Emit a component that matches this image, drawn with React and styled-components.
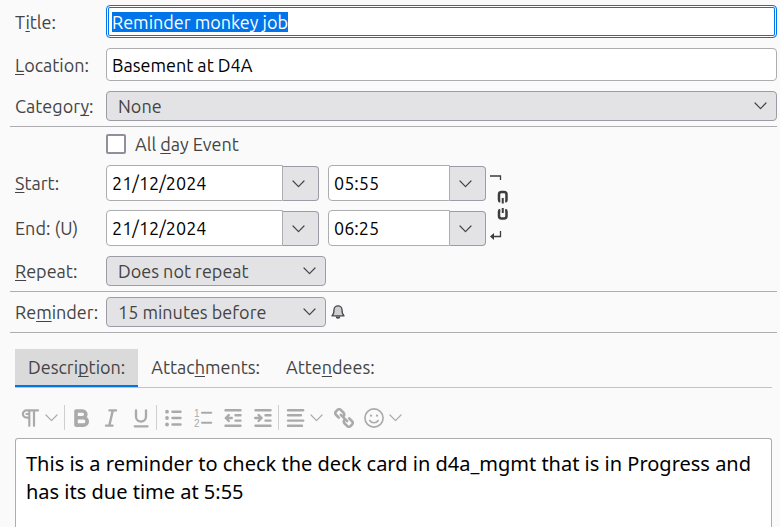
import React, { useEffect, useRef, useState } from 'react';
import styled, { createGlobalStyle } from 'styled-components';

const GlobalStyle = createGlobalStyle`
  * {
    box-sizing: border-box;
  }

  body {
    margin: 0;
    background: #fafafa;
    color: #444;
    font-family: Ubuntu, "Noto Sans", sans-serif;
    font-size: 18px;
    line-height: 24px;
  }

  button, input, select, textarea {
    margin: 0;
    font: inherit;
    color: inherit;
  }
`;

const Page = styled.main`
  display: flex;
  flex-direction: column;
  min-height: 100vh;
`;

const Section = styled.section`
  display: grid;
  row-gap: 10px;
  margin: 0 3px 0 10px;
  padding: 5px 0 5px 5px;
  border-bottom: 1px solid #adadb0;
`;

const Row = styled.div`
  display: grid;
  grid-template-columns: 91px minmax(0, 1fr);
  align-items: center;
`;

const AllDay = styled.label`
  grid-column: 2;
  display: flex;
  align-items: center;
  gap: 9px;
  height: 23px;
`;

const CheckBox = styled.input`
  appearance: none;
  width: 20px;
  height: 20px;
  border: 2px solid #8f8f9d;
  border-radius: 2px;
  background: white;

  &:checked {
    background: #0074e8;
  }
`;

const Key = styled.span`
  text-decoration: underline;
  text-decoration-thickness: 1px;
  text-underline-offset: 2px;
  text-decoration-skip-ink: none;
`;

const TextInput = styled.input`
  width: 100%;
  height: 33px;
  padding: 0 5px;
  border: 1px solid #adadb0;
  border-radius: 4px;
  background: white;
  color: #000;
  outline: none;

  &:focus {
    border-color: #0074e8;
    box-shadow: inset 0 0 0 1px white, inset 0 0 0 2px #0074e8;
  }

  &::selection {
    background: #0074e8;
    color: white;
  }
`;

const SelectBox = styled.div`
  position: relative;
  width: ${props => props.$wide ? '100%' : '220px'};

  svg {
    position: absolute;
    top: 11px;
    right: 10px;
    pointer-events: none;
  }
`;

const Select = styled.select`
  appearance: none;
  display: block;
  width: 100%;
  height: 30px;
  padding: 0 30px 0 11px;
  border: 1px solid #9c9ca6;
  border-radius: 4px;
  background: #e3e3e6;
`;

const ReminderField = styled.div`
  display: flex;
  align-items: center;
  gap: 5px;
`;

const DateGrid = styled.div`
  display: grid;
  grid-template-columns: 91px 222px 162px auto;
  justify-content: start;
  align-items: center;
  row-gap: 9px;
`;

const Picker = styled.div`
  display: flex;
  align-items: flex-end;
  margin-right: ${props => props.$gap}px;
`;

const PickerInput = styled(TextInput)`
  flex: 1;
  min-width: 0;
  height: 36px;
  border-radius: 4px 0 0 4px;
`;

const PickerButton = styled.button`
  display: flex;
  align-items: center;
  justify-content: center;
  width: 36px;
  height: 35px;
  padding: 0 4px 0 0;
  border: 1px solid #9c9ca6;
  border-left: 0;
  border-radius: 0 4px 4px 0;
  background: #e3e3e6;
`;

const LinkTimes = styled.button`
  grid-column: 4;
  grid-row: 1 / 3;
  display: flex;
  padding: 0;
  border: 0;
  background: none;
`;

const Tabs = styled.div`
  display: flex;
  height: 39px;
  margin: 16px 8px 0 15px;
  border-bottom: 1px solid #c4c4c6;
`;

const Tab = styled.button`
  padding: 0 13px;
  border: 0;
  border-bottom: 2px solid ${props => props.$active ? '#0074e8' : 'transparent'};
  background: ${props => props.$active ? '#dadadb' : 'none'};
`;

const Toolbar = styled.div`
  display: flex;
  height: 50px;
  margin: 0 8px 0 15px;
  padding: 17px 0 7px;
`;

const Tool = styled.button`
  display: flex;
  align-items: center;
  flex: none;
  width: ${props => props.$menu ? '49px' : '30px'};
  gap: 5px;
  padding: 0 0 0 5px;
  border: 0;
  background: none;
  color: #aaaaab;
`;

const Separator = styled.div`
  width: 1px;
  height: 25px;
  margin-right: 1px;
  background: #cfcfd0;
`;

const Editor = styled.textarea`
  display: block;
  flex: 1;
  min-height: 88px;
  margin: 0 8px 0 15px;
  padding: 11px 10px;
  border: 1px solid #adadb0;
  border-bottom: 0;
  border-radius: 3px 3px 0 0;
  background: white;
  color: #000;
  font-family: "Noto Sans", sans-serif;
  font-size: 20px;
  line-height: 28px;
  resize: none;
  overflow: hidden;
  outline: none;
`;

const Chevron = () => (
  <svg width="13" height="8" viewBox="0 0 13 8" fill="none" stroke="currentColor" strokeWidth="1.2" strokeLinecap="round" strokeLinejoin="round">
    <path d="M1 1 6.5 6.7 12 1" />
  </svg>
);

const Icon = ({ children, width = 2.4 }) => (
  <svg width="20" height="20" viewBox="0 0 20 20" fill="none" stroke="currentColor" strokeWidth={width} strokeLinecap="round" strokeLinejoin="round">
    {children}
  </svg>
);

const ParagraphIcon = () => (
  <Icon width={2.2}>
    <path d="M18 2.4H6.5a3.6 3.6 0 0 0 0 7.2H9M9.3 2.4V17.8M14 2.4V17.8" />
    <path d="M6.5 6H8.5" />
  </Icon>
);

const BoldIcon = () => (
  <Icon width={3.6}>
    <path d="M5 3H11.5a3.3 3.3 0 0 1 0 6.7H5M5 9.7H12.5a3.7 3.7 0 0 1 0 7.4H5ZM5 3V17" />
  </Icon>
);

const ItalicIcon = () => (
  <Icon width={2.4}>
    <path d="M8.5 2.4H15M5 17.6H11.5M11.8 2.4 8.3 17.6" />
  </Icon>
);

const UnderlineIcon = () => (
  <Icon width={2.3}>
    <path d="M5 2.3V8.6a5 5 0 0 0 10 0V2.3M3.7 18.3H16.6" />
  </Icon>
);

const BulletsIcon = () => (
  <Icon>
    <path d="M9.5 3.7H17.5M9.5 10H17.5M9.5 16.5H17.5" />
    <g fill="currentColor" stroke="none">
      <circle cx="4" cy="3.7" r="1.9" />
      <circle cx="4" cy="10" r="1.9" />
      <circle cx="4" cy="16.5" r="1.9" />
    </g>
  </Icon>
);

const NumbersIcon = () => (
  <Icon width={2}>
    <path d="M9 4.8H18.3M9 14.7H18.3" />
    <g fill="currentColor" stroke="none" fontSize="10" fontFamily="Liberation Sans, sans-serif">
      <text x="1" y="9">1</text>
      <text x="1" y="19">2</text>
    </g>
  </Icon>
);

const OutdentIcon = () => (
  <Icon>
    <path d="M2.5 2.2H17.5M12.5 7.3H17.5M12.5 12.6H17.5M2.5 17.8H17.5" />
    <path d="M2.8 10H8.8M5.8 7 2.8 10l3 3" />
  </Icon>
);

const IndentIcon = () => (
  <Icon>
    <path d="M2.5 2.2H17.5M12.5 7.3H17.5M12.5 12.6H17.5M2.5 17.8H17.5" />
    <path d="M2.2 10H8.2M5.6 7l3 3-3 3" />
  </Icon>
);

const AlignIcon = () => (
  <Icon>
    <path d="M3 2.2H18.2M3 7.3H16M3 12.6H18.2M3 17.8H17" />
  </Icon>
);

const ChainIcon = () => (
  <Icon width={2.6}>
    <g transform="translate(10 10) rotate(45)">
      <path d="M-4 3.4H-8A2.3 2.3 0 0 1-10.3 1.1V-1.1A2.3 2.3 0 0 1-8-3.4H-4A2.3 2.3 0 0 1-1.7-1.1" />
      <path d="M4-3.4H8A2.3 2.3 0 0 1 10.3-1.1V1.1A2.3 2.3 0 0 1 8 3.4H4A2.3 2.3 0 0 1 1.7 1.1" />
      <path d="M-4.5 0H4.5" />
    </g>
  </Icon>
);

const SmileIcon = () => (
  <Icon width={1.6}>
    <circle cx="10" cy="10" r="9.1" />
    <path d="M5.8 12.5c2 3 6.4 3 8.4 0" />
    <circle cx="7" cy="7.7" r="1.1" fill="currentColor" stroke="none" />
    <circle cx="13" cy="7.7" r="1.1" fill="currentColor" stroke="none" />
  </Icon>
);

const BellIcon = () => (
  <svg width="14" height="16" viewBox="0 0 14 16" fill="none" stroke="#4a4a4d" strokeWidth="1.3" strokeLinejoin="round">
    <path d="M1 11.8c1.5-1.2 2-2.5 2-6a4 4 0 0 1 8 0c0 3.5.5 4.8 2 6Z" fill="#cfcfd2" />
    <path d="M5.3 12.5a1.7 1.7 0 0 0 3.4 0" fill="#4a4a4d" />
  </svg>
);

// bracket from the start time to the end time, with the open link between
const TimeLinkIcon = () => (
  <svg width="20" height="70" viewBox="0 0 20 70" fill="none" stroke="#3d3d3d">
    <path d="M0 5H10.5V9M10.5 60V65.5H3" strokeWidth="1.3" />
    <path d="M0 65.5 4 62V69Z" fill="#3d3d3d" stroke="none" />
    <path d="M10.3 30.5A1.5 1.5 0 0 1 9 29V23.500A2.500 2.500 0 0 1 11.500 21H14a2.500 2.500 0 0 1 2.500 2.500V29A1.500 1.500 0 0 1 15.200 30.500" strokeWidth="2.500" />
    <path d="M10.300 39A1.500 1.500 0 0 0 9 40.500V45a2.500 2.500 0 0 0 2.500 2.500H14A2.500 2.500 0 0 0 16.500 45V40.500A1.500 1.500 0 0 0 15.200 39" strokeWidth="2.500" />
    <path d="M12.750 27V32.500M12.750 37V42" strokeWidth="2" />
  </svg>
);

const DateTimeRow = ({ id, name, date, time, children }) => (
  <>
    <label htmlFor={id}>{children}</label>
    <Picker $gap={9}>
      <PickerInput id={id} defaultValue={date} />
      <PickerButton type="button" aria-label={`Choose ${name} date`}><Chevron /></PickerButton>
    </Picker>
    <Picker $gap={4}>
      <PickerInput aria-label={`${name} time`} defaultValue={time} />
      <PickerButton type="button" aria-label={`Choose ${name} time`}><Chevron /></PickerButton>
    </Picker>
  </>
);

const SelectField = ({ id, wide, options }) => (
  <SelectBox $wide={wide}>
    <Select id={id}>
      {options.map(option => <option key={option}>{option}</option>)}
    </Select>
    <Chevron />
  </SelectBox>
);

const EventForm = () => {
  const [tab, setTab] = useState('description');
  const titleRef = useRef(null);

  useEffect(() => {
    titleRef.current.focus();
    titleRef.current.select();
  }, []);

  return (
    <Page>
      <GlobalStyle />
      <Section>
        <Row>
          <label htmlFor="title">T<Key>i</Key>tle:</label>
          <TextInput id="title" ref={titleRef} defaultValue="Reminder monkey job" />
        </Row>
        <Row>
          <label htmlFor="location"><Key>L</Key>ocation:</label>
          <TextInput id="location" defaultValue="Basement at D4A" />
        </Row>
        <Row>
          <label htmlFor="category">Categor<Key>y</Key>:</label>
          <SelectField id="category" wide options={['None']} />
        </Row>
      </Section>

      <Section>
        <Row>
          <AllDay>
            <CheckBox type="checkbox" />
            <span>All <Key>d</Key>ay Event</span>
          </AllDay>
        </Row>
        <DateGrid>
          <DateTimeRow id="start" name="start" date="21/12/2024" time="05:55"><Key>S</Key>tart:</DateTimeRow>
          <DateTimeRow id="end" name="end" date="21/12/2024" time="06:25">End: (U)</DateTimeRow>
          <LinkTimes type="button" aria-label="Keep duration"><TimeLinkIcon /></LinkTimes>
        </DateGrid>
        <Row>
          <label htmlFor="repeat"><Key>R</Key>epeat:</label>
          <SelectField id="repeat" options={['Does not repeat']} />
        </Row>
      </Section>

      <Section>
        <Row>
          <label htmlFor="reminder">Re<Key>m</Key>inder:</label>
          <ReminderField>
            <SelectField id="reminder" options={['15 minutes before']} />
            <BellIcon />
          </ReminderField>
        </Row>
      </Section>

      <Tabs role="tablist">
        <Tab role="tab" $active={tab === 'description'} onClick={() => setTab('description')}>Descri<Key>p</Key>tion:</Tab>
        <Tab role="tab" $active={tab === 'attachments'} onClick={() => setTab('attachments')}>Attac<Key>h</Key>ments:</Tab>
        <Tab role="tab" $active={tab === 'attendees'} onClick={() => setTab('attendees')}>Atte<Key>n</Key>dees:</Tab>
      </Tabs>

      <Toolbar role="toolbar">
        <Tool $menu aria-label="Paragraph"><ParagraphIcon /><Chevron /></Tool>
        <Separator />
        <Tool aria-label="Bold"><BoldIcon /></Tool>
        <Tool aria-label="Italic"><ItalicIcon /></Tool>
        <Tool aria-label="Underline"><UnderlineIcon /></Tool>
        <Separator />
        <Tool aria-label="Bulleted list"><BulletsIcon /></Tool>
        <Tool aria-label="Numbered list"><NumbersIcon /></Tool>
        <Tool aria-label="Outdent"><OutdentIcon /></Tool>
        <Tool aria-label="Indent"><IndentIcon /></Tool>
        <Separator />
        <Tool $menu aria-label="Alignment"><AlignIcon /><Chevron /></Tool>
        <Tool aria-label="Link"><ChainIcon /></Tool>
        <Tool $menu aria-label="Smiley"><SmileIcon /><Chevron /></Tool>
      </Toolbar>
      <Editor
        aria-label="Description"
        spellCheck={false}
        defaultValue="This is a reminder to check the deck card in d4a_mgmt that is in Progress and has its due time at 5:55"
      />
    </Page>
  );
};

export default EventForm;
